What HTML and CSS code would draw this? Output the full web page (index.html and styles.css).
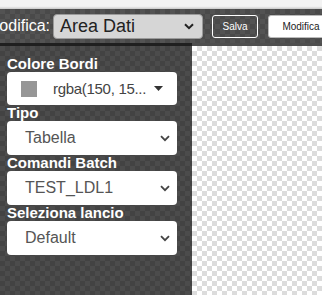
FILE: index.html
```html
<!DOCTYPE html>
<html lang="it">
<head>
  <meta charset="UTF-8">
  <title>Editor</title>
  <link rel="stylesheet" href="styles.css">
</head>
<body>
  <div class="striscia"></div>

  <div class="barra">
    <span class="etichetta">Modifica:</span>
    <div class="scelta scelta-grigia">
      <span>Area Dati</span>
      <svg width="10" height="7" viewBox="0 0 10 7"><path d="M1 1.2 L5 5.2 L9 1.2" fill="none" stroke="#222" stroke-width="2"/></svg>
    </div>
    <button class="bottone bottone-vuoto">Salva</button>
    <button class="bottone bottone-pieno">Modifica</button>
  </div>

  <div class="corpo">
    <div class="pannello">
      <div class="campo">Colore Bordi</div>
      <div class="box box-colore">
        <span class="campione"></span>
        <span class="valore">rgba(150, 15...</span>
        <svg width="9" height="5" viewBox="0 0 9 5"><path d="M0 0 H9 L4.5 5 Z" fill="#333"/></svg>
      </div>

      <div class="campo">Tipo</div>
      <div class="box">
        <span>Tabella</span>
        <svg width="10" height="7" viewBox="0 0 10 7"><path d="M1 1.2 L5 5.2 L9 1.2" fill="none" stroke="#444" stroke-width="1.8"/></svg>
      </div>

      <div class="campo">Comandi Batch</div>
      <div class="box">
        <span>TEST_LDL1</span>
        <svg width="10" height="7" viewBox="0 0 10 7"><path d="M1 1.2 L5 5.2 L9 1.2" fill="none" stroke="#444" stroke-width="1.8"/></svg>
      </div>

      <div class="campo">Seleziona lancio</div>
      <div class="box">
        <span>Default</span>
        <svg width="10" height="7" viewBox="0 0 10 7"><path d="M1 1.2 L5 5.2 L9 1.2" fill="none" stroke="#444" stroke-width="1.8"/></svg>
      </div>
    </div>

    <div class="tela"></div>
  </div>
</body>
</html>
```

FILE: styles.css
```css
body {
  margin: 0;
  height: 100vh;
  display: flex;
  flex-direction: column;
  font-family: "Liberation Sans", Arial, sans-serif;
  overflow: hidden;
}

.striscia {
  height: 9px;
  background: linear-gradient(#f3f3f3 70%, #c8c8c8);
}

.barra {
  height: 34px;
  display: flex;
  align-items: center;
  background-color: #535353;
  background-image:
    linear-gradient(45deg, #4a4a4a 25%, transparent 25%, transparent 75%, #4a4a4a 75%),
    linear-gradient(45deg, #4a4a4a 25%, transparent 25%, transparent 75%, #4a4a4a 75%);
  background-size: 10px 10px;
  background-position: 0 0, 5px 5px;
  overflow: hidden;
}

.etichetta {
  color: #fff;
  font-size: 16px;
  margin-left: -14px;
  margin-right: 3px;
  white-space: nowrap;
}

.scelta {
  display: flex;
  align-items: center;
  justify-content: space-between;
  box-sizing: border-box;
  width: 150px;
  height: 25px;
  padding: 0 8px 0 6px;
  border-radius: 4px;
  font-size: 18px;
  color: #222;
  flex-shrink: 0;
}

.scelta-grigia {
  background: #d6d6d6;
  border: 1px solid #9a9a9a;
}

.bottone {
  font-family: "Liberation Sans", Arial, sans-serif;
  font-size: 10px;
  height: 23px;
  border-radius: 3px;
  flex-shrink: 0;
  padding: 0;
}

.bottone-vuoto {
  margin-left: 9px;
  width: 46px;
  background: transparent;
  border: 1px solid #fff;
  color: #fff;
}

.bottone-pieno {
  margin-left: 10px;
  width: 66px;
  background: #fff;
  border: 1px solid #bbb;
  color: #222;
}

.corpo {
  flex: 1;
  display: flex;
}

.pannello {
  width: 192px;
  box-sizing: border-box;
  padding: 10px 15px 0 7px;
  border-top: 3px solid #1f1f1f;
  background-color: #4c4c4c;
  background-image:
    linear-gradient(45deg, #434343 25%, transparent 25%, transparent 75%, #434343 75%),
    linear-gradient(45deg, #434343 25%, transparent 25%, transparent 75%, #434343 75%);
  background-size: 10px 10px;
  background-position: 0 0, 5px 5px;
}

.campo {
  color: #fff;
  font-weight: bold;
  font-size: 15px;
  line-height: 16px;
}

.box {
  display: flex;
  align-items: center;
  justify-content: space-between;
  box-sizing: border-box;
  height: 34px;
  padding: 0 7px 0 18px;
  background: #fff;
  border-radius: 4px;
  font-size: 16px;
  color: #555;
  white-space: nowrap;
}

.box-colore {
  height: 33px;
  padding: 0 14px 0 14px;
  justify-content: flex-start;
}

.campione {
  width: 16px;
  height: 16px;
  background: rgb(150, 150, 150);
  flex-shrink: 0;
}

.valore {
  margin-left: 16px;
  flex: 1;
  font-size: 15px;
  letter-spacing: -0.3px;
  color: #444;
}

.tela {
  flex: 1;
  border-top: 3px solid #4e4e4e;
  background-color: #fff;
  background-image:
    linear-gradient(45deg, #dcdcdc 25%, transparent 25%, transparent 75%, #dcdcdc 75%),
    linear-gradient(45deg, #dcdcdc 25%, transparent 25%, transparent 75%, #dcdcdc 75%);
  background-size: 10px 10px;
  background-position: 0 0, 5px 5px;
}
```
